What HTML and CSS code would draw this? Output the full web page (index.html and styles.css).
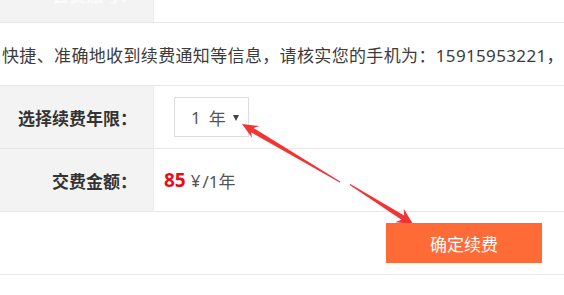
FILE: index.html
```html
<!DOCTYPE html>
<html lang="zh-CN">
<head>
<meta charset="utf-8">
<title>续费</title>
<link rel="stylesheet" href="styles.css">
</head>
<body>
<div class="page">
  <div class="row row-cut">
    <div class="label"><span class="faint">会员账号：</span></div>
    <div class="value"></div>
  </div>
  <div class="row row-notice">
    <p class="notice">快捷、准确地收到续费通知等信息，请核实您的手机为：15915953221，如有变更请及时修改。</p>
  </div>
  <div class="row">
    <div class="label">选择续费年限：</div>
    <div class="value">
      <div class="select">
        <span class="num">1</span><span>年</span><span class="caret"></span>
      </div>
    </div>
  </div>
  <div class="row">
    <div class="label">交费金额：</div>
    <div class="value">
      <span class="price">85</span><span class="unit">¥</span><span class="period">/1年</span>
    </div>
  </div>
  <div class="row row-action">
    <button class="btn" type="button">确定续费</button>
  </div>
  <svg class="arrows" width="564" height="295" viewBox="0 0 564 295" xmlns="http://www.w3.org/2000/svg">
    <polygon fill="#f13434" points="339.75,182.43 251.0,132.3 252.2,138.1 242,124 259.4,126.1 253.6,128.0 340.25,181.57"/>
    <polygon fill="#f13434" points="349.73,184.92 401.5,219.8 395.2,222.3 413,224 403.7,208.7 404.17,215.5 350.27,184.08"/>
  </svg>
</div>
</body>
</html>
```
FILE: styles.css
```css
html, body {
  margin: 0;
  padding: 0;
  background: #ffffff;
}

body {
  width: 564px;
  height: 295px;
  overflow: hidden;
  font-family: "Noto Sans", "Noto Sans CJK SC", sans-serif;
  font-size: 17px;
  color: #3a3a3a;
}

.page {
  position: relative;
  width: 564px;
  height: 295px;
}

.row {
  display: flex;
  height: 62px;
  border-bottom: 1px solid #e8e8e8;
}

.row-cut {
  height: 22px;
}

.label {
  box-sizing: border-box;
  width: 154px;
  flex: none;
  background: #f3f3f3;
  border-right: 1px solid #ebebeb;
  display: flex;
  align-items: center;
  justify-content: flex-end;
  padding-right: 16px;
  font-weight: bold;
  color: #333333;
}

.row-cut .label {
  align-items: flex-start;
  overflow: hidden;
}

.faint {
  line-height: 17px;
  margin-top: -13px;
  color: #fbfbfb;
}

.value {
  flex: 1;
  display: flex;
  align-items: center;
  padding-left: 10px;
}

.row-notice {
  align-items: center;
  overflow: hidden;
}

.notice {
  margin: 0;
  padding-left: 2px;
  white-space: nowrap;
  letter-spacing: 0.35px;
  color: #3c3c3c;
}

.select {
  box-sizing: border-box;
  margin-left: 10px;
  width: 75px;
  height: 40px;
  border: 1px solid #dddddd;
  display: flex;
  align-items: center;
  padding-left: 16px;
  color: #555555;
}

.num {
  margin-right: 8px;
}

.caret {
  width: 0;
  height: 0;
  margin-left: 7px;
  margin-top: 2px;
  border-left: 3px solid transparent;
  border-right: 3px solid transparent;
  border-top: 6px solid #444444;
}

.price {
  color: #e60d17;
  font-weight: bold;
  font-size: 19px;
}

.unit {
  margin-left: 5px;
  color: #555555;
}

.period {
  margin-left: 2px;
  color: #555555;
}

.row-action {
  justify-content: flex-end;
  align-items: center;
  padding-right: 22px;
}

.btn {
  position: relative;
  z-index: 2;
  width: 156px;
  height: 40px;
  border: none;
  border-radius: 0;
  background: #ff6b37;
  color: #ffffff;
  font-family: "Noto Sans", "Noto Sans CJK SC", sans-serif;
  font-size: 17px;
  padding: 0;
}

.arrows {
  position: absolute;
  left: 0;
  top: 0;
  z-index: 1;
  pointer-events: none;
}
```
